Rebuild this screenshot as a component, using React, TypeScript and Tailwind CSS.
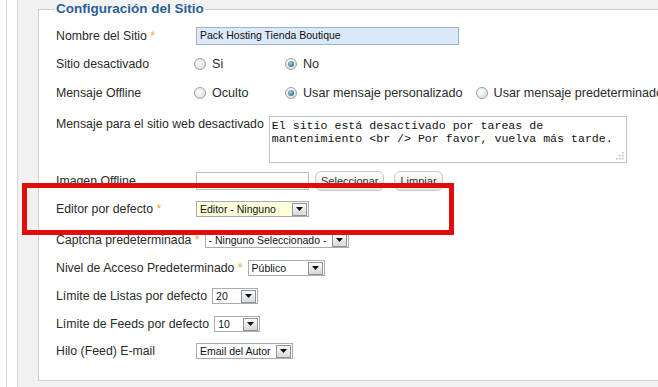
import React from 'react';

const Req = () => <span className="text-[#eea53a]"> *</span>;

const Label: React.FC<{ children: React.ReactNode }> = ({ children }) => (
  <div className="min-w-[140px] pr-[5px] text-[12.3px] leading-[16px] text-[#2b2b2b] whitespace-nowrap">
    {children}
  </div>
);

const Radio: React.FC<{ checked?: boolean; label: string }> = ({ checked, label }) => (
  <div className="flex items-center min-w-[78px] mr-[15px] -ml-[2px] gap-[6px]">
    <span className="w-[12px] h-[12px] rounded-full border border-[#9da1a5] bg-[radial-gradient(circle_at_40%_35%,#ffffff,#d4d6d8)] flex items-center justify-center">
      {checked && (
        <span className="w-[6px] h-[6px] rounded-full bg-[radial-gradient(circle_at_40%_35%,#9fd0ea,#1e4f70)]" />
      )}
    </span>
    <span className="text-[12.6px] text-[#2b2b2b] whitespace-nowrap">{label}</span>
  </div>
);

const Select: React.FC<{ value: string; width: string; yellow?: boolean }> = ({ value, width, yellow }) => (
  <div
    className={`${width} h-[16px] flex items-center justify-between border border-[#a7adb2] ${yellow ? 'bg-[#ffffdc]' : 'bg-white'} pl-[3px] pr-[1px]`}
  >
    <span className="text-[10.5px] leading-[14px] text-[#111] whitespace-nowrap overflow-hidden">{value}</span>
    <span className="w-[15px] h-[13px] shrink-0 border border-[#8e9499] bg-[linear-gradient(#fbfbfb,#d8d8d8)] flex items-center justify-center">
      <svg width="7" height="4" viewBox="0 0 7 4">
        <path d="M0 0 H7 L3.5 4 Z" fill="#111" />
      </svg>
    </span>
  </div>
);

const Btn: React.FC<{ children: React.ReactNode }> = ({ children }) => (
  <div className="h-[20px] px-[5px] flex items-center rounded-[6px] border border-[#c9c9c9] bg-[linear-gradient(#ffffff,#e4e4e4)] text-[11px] text-[#333]">
    {children}
  </div>
);

export default function App() {
  return (
    <div className="relative w-[658px] h-[387px] overflow-hidden bg-white font-['Liberation_Sans',Arial,sans-serif]">
      <div className="ml-[6px] h-full border-l border-[#d6d6d6] pl-[10px]">
        <div className="h-full border-l border-[#d6d6d6] bg-[#f2f2f2] pl-[20px]">
          <fieldset className="w-[680px] h-[381px] border border-[#cfcfcf] bg-white pl-[17px]">
            <legend className="px-[1px] -ml-[1px] text-[13.5px] leading-[18px] font-bold text-[#2c5f97]">
              Configuración del Sitio
            </legend>

            {/* Nombre del Sitio */}
            <div className="mt-[8px] h-[20px] flex items-center">
              <Label>
                Nombre del Sitio<Req />
              </Label>
              <div className="w-[263px] h-[18px] border border-[#9fb5ca] bg-[#dbe9f9] pl-[3px] flex items-center text-[10.5px] text-[#111]">
                Pack Hosting Tienda Boutique
              </div>
            </div>

            {/* Sitio desactivado */}
            <div className="mt-[8px] h-[20px] flex items-center">
              <Label>Sitio desactivado</Label>
              <Radio label="Si" />
              <Radio label="No" checked />
            </div>

            {/* Mensaje Offline */}
            <div className="mt-[9px] h-[20px] flex items-center">
              <Label>Mensaje Offline</Label>
              <Radio label="Oculto" />
              <Radio label="Usar mensaje personalizado" checked />
              <Radio label="Usar mensaje predeterminado" />
            </div>

            {/* Mensaje para el sitio web */}
            <div className="mt-[13px] flex items-start">
              <Label>Mensaje para el sitio web desactivado</Label>
              <div className="relative w-[358px] h-[47px] border border-[#c4c4c4] bg-white px-[2px] pt-[2px] font-['Liberation_Mono',monospace] text-[11.6px] leading-[13px] text-[#111] whitespace-pre">
                {'El sitio está desactivado por tareas de\nmantenimiento <br /> Por favor, vuelva más tarde.'}
                <svg className="absolute right-[2px] bottom-[2px]" width="8" height="8" viewBox="0 0 8 8">
                  <rect x="6" y="0" width="1.5" height="1.5" fill="#bbb" />
                  <rect x="3" y="3" width="1.5" height="1.5" fill="#bbb" />
                  <rect x="6" y="3" width="1.5" height="1.5" fill="#bbb" />
                  <rect x="0" y="6" width="1.5" height="1.5" fill="#bbb" />
                  <rect x="3" y="6" width="1.5" height="1.5" fill="#bbb" />
                  <rect x="6" y="6" width="1.5" height="1.5" fill="#bbb" />
                </svg>
              </div>
            </div>

            {/* Imagen Offline */}
            <div className="mt-[8px] h-[20px] flex items-center">
              <Label>Imagen Offline</Label>
              <div className="w-[113px] h-[18px] border border-[#bdbdbd] bg-white" />
              <div className="ml-[6px]">
                <Btn>Seleccionar</Btn>
              </div>
              <div className="ml-[10px]">
                <Btn>Limpiar</Btn>
              </div>
            </div>

            {/* Editor */}
            <div className="mt-[8px] h-[20px] flex items-center">
              <Label>
                Editor por defecto<Req />
              </Label>
              <Select value="Editor - Ninguno" width="w-[113px]" yellow />
            </div>

            {/* Captcha */}
            <div className="mt-[11px] h-[20px] flex items-center">
              <Label>
                Captcha predeterminada<Req />
              </Label>
              <Select value="- Ninguno Seleccionado -" width="w-[144px]" />
            </div>

            {/* Nivel de acceso */}
            <div className="mt-[8px] h-[20px] flex items-center">
              <Label>
                Nivel de Acceso Predeterminado<Req />
              </Label>
              <Select value="Público" width="w-[77px]" />
            </div>

            {/* Limite listas */}
            <div className="mt-[8px] h-[20px] flex items-center">
              <Label>Límite de Listas por defecto</Label>
              <Select value="20" width="w-[46px]" />
            </div>

            {/* Limite feeds */}
            <div className="mt-[8px] h-[20px] flex items-center">
              <Label>Límite de Feeds por defecto</Label>
              <Select value="10" width="w-[46px]" />
            </div>

            {/* Hilo */}
            <div className="mt-[7px] h-[20px] flex items-center">
              <Label>Hilo (Feed) E-mail</Label>
              <Select value="Email del Autor" width="w-[97px]" />
            </div>
          </fieldset>
        </div>
      </div>

      {/* red highlight annotation */}
      <div className="absolute left-[22px] top-[183px] w-[432px] h-[52px] border-[5px] border-[#e00d0d]" />
    </div>
  );
}
